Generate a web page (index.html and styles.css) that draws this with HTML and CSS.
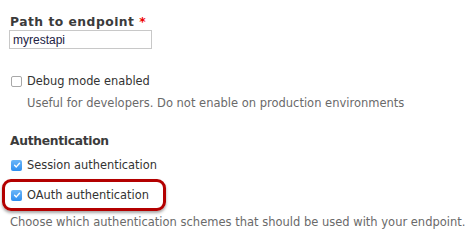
FILE: index.html
```html
<!DOCTYPE html>
<html>
<head>
<meta charset="utf-8">
<link rel="stylesheet" href="styles.css">
</head>
<body>
<div class="form">
  <div class="field">
    <label class="title path">Path to endpoint <span class="req">*</span></label>
    <input class="text" type="text" value="myrestapi">
  </div>
  <div class="field debug">
    <div class="check-row">
      <span class="box"></span>
      <span class="check-label">Debug mode enabled</span>
    </div>
    <div class="help indent">Useful for developers. Do not enable on production environments</div>
  </div>
  <div class="field auth">
    <div class="title authtitle">Authentication</div>
    <div class="check-row session">
      <span class="box checked"><svg viewBox="0 0 10 10" width="10" height="10"><path d="M2.6 5.2 L4.3 6.9 L7.5 3.2" fill="none" stroke="#fff" stroke-width="1.4" stroke-linecap="round" stroke-linejoin="round"/></svg></span>
      <span class="check-label">Session authentication</span>
    </div>
    <div class="check-row oauth highlight">
      <span class="box checked"><svg viewBox="0 0 10 10" width="10" height="10"><path d="M2.6 5.2 L4.3 6.9 L7.5 3.2" fill="none" stroke="#fff" stroke-width="1.4" stroke-linecap="round" stroke-linejoin="round"/></svg></span>
      <span class="check-label">OAuth authentication</span>
    </div>
    <div class="help">Choose which authentication schemes that should be used with your endpoint.</div>
  </div>
</div>
</body>
</html>
```
FILE: styles.css
```css
html, body {
  margin: 0;
  padding: 0;
  background: #fff;
}
body {
  font-family: "DejaVu Sans", Verdana, sans-serif;
  font-size: 11.4px;
  color: #333;
}
.form {
  padding: 14px 10px 0 10px;
}
.title {
  display: block;
  font-weight: bold;
  font-size: 12.3px;
  color: #3b3b3b;
  line-height: 16px;
}
.path {
  letter-spacing: 0.5px;
}
.authtitle {
  letter-spacing: -0.3px;
}
.req {
  color: #e00;
}
.text {
  display: block;
  box-sizing: border-box;
  width: 143px;
  height: 19px;
  margin: 0 0 0 -1px;
  padding: 0 3px;
  border: 1px solid #c8c8c8;
  font-family: "Liberation Sans", Arial, sans-serif;
  font-size: 12px;
  color: #222244;
  outline: none;
}
.debug {
  margin-top: 25px;
}
.check-row {
  display: flex;
  align-items: center;
  gap: 5px;
  height: 14px;
  color: #333;
}
.check-label {
  line-height: 14px;
}
.box {
  box-sizing: border-box;
  width: 11px;
  height: 11px;
  margin-left: 1px;
  border: 1px solid #a8a8a8;
  border-radius: 2px;
  background: #fff;
  display: flex;
  align-items: center;
  justify-content: center;
}
.box.checked {
  border: none;
  background: linear-gradient(#6cb6f8, #2f8ff0);
}
.box svg {
  display: block;
}
.help {
  color: #6a6a6a;
  font-size: 11.5px;
  line-height: 16px;
  margin-top: 7px;
  white-space: nowrap;
}
.indent {
  margin-left: 17px;
}
.auth {
  margin-top: 22px;
}
.session {
  margin-top: 9px;
}
.oauth {
  margin-top: 16px;
}
.highlight {
  position: relative;
  width: max-content;
}
.highlight::after {
  content: "";
  position: absolute;
  left: -8px;
  right: -17px;
  top: -9px;
  bottom: -9px;
  border: 3.5px solid #b30000;
  border-radius: 9px;
  box-shadow: 0 2px 3px rgba(0,0,0,0.35);
}
.auth .help {
  margin-top: 12px;
}
```
